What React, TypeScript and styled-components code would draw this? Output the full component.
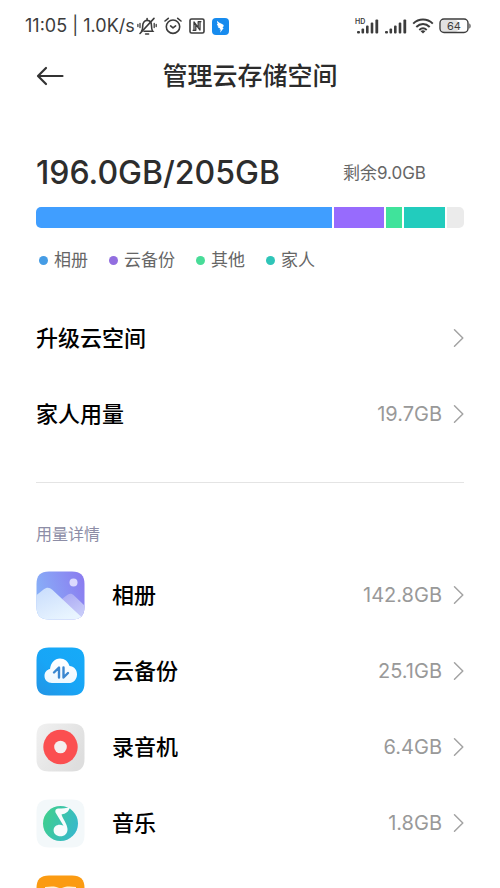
import React from "react";
import styled, { createGlobalStyle } from "styled-components";

const GlobalStyle = createGlobalStyle`
  *, *::before, *::after { box-sizing: border-box; }
  body {
    margin: 0;
    background: #fff;
    color: #000;
    font-family: Inter, "Noto Sans CJK SC", sans-serif;
  }
`;

const Screen = styled.div`
  height: 100vh;
  overflow-y: auto;
  scrollbar-width: none;
  background: #fff;
`;

const StatusBar = styled.div`
  display: flex;
  align-items: center;
  justify-content: space-between;
  height: 52px;
  padding: 0 28px 0 25px;
  color: #3c3c3c;
  font-size: 18px;
  line-height: 24px;
  white-space: nowrap;

  svg { display: block; flex: none; }
`;

const StatusGroup = styled.div<{ $gap: number }>`
  display: flex;
  align-items: center;
  gap: ${(p) => p.$gap}px;
`;

const StatusText = styled.span`
  margin-right: -5px;
`;

const Header = styled.header`
  display: grid;
  grid-template-columns: 48px 1fr 48px;
  align-items: center;
  height: 48px;
  padding: 0 26px;
`;

const BackButton = styled.button`
  display: grid;
  place-items: center;
  width: 48px;
  height: 48px;
  padding: 0;
  border: 0;
  background: none;
  color: #333;
`;

const Title = styled.h1`
  margin: 0;
  color: #2b2b2b;
  font-size: 25px;
  line-height: 36px;
  font-weight: 500;
  text-align: center;
`;

const Content = styled.main`
  padding: 0 36px;
`;

const Summary = styled.section`
  padding: 50px 0 28px;
`;

const Totals = styled.div`
  display: flex;
  align-items: center;
  justify-content: space-between;
  height: 46px;
  padding-right: 38px;
  white-space: nowrap;
`;

const Total = styled.strong`
  color: #2d2d2d;
  font-size: 32px;
  line-height: 40px;
  font-weight: 500;
`;

const Remaining = styled.span`
  color: #666;
  font-size: 17px;
  line-height: 24px;
`;

const UsageBar = styled.div`
  display: flex;
  gap: 2px;
  height: 21px;
  margin-top: 11px;
  border-radius: 5px;
  overflow: hidden;
`;

const Segment = styled.span<{ $share: number; $color: string }>`
  flex: ${(p) => p.$share} 1 0;
  background: ${(p) => p.$color};
`;

const Legend = styled.ul`
  display: flex;
  gap: 21px;
  margin: 0;
  padding: 20px 0 0 3px;
  list-style: none;
`;

const LegendItem = styled.li<{ $color: string }>`
  display: flex;
  align-items: center;
  gap: 6px;
  color: #666;
  font-size: 17px;
  line-height: 24px;

  &::before {
    content: "";
    width: 9px;
    height: 9px;
    border-radius: 50%;
    background: ${(p) => p.$color};
  }
`;

const RowList = styled.ul`
  margin: 0;
  padding: 0;
  list-style: none;
`;

const RowButton = styled.button`
  display: flex;
  align-items: center;
  width: 100%;
  height: 76px;
  padding: 0;
  border: 0;
  background: none;
  color: #000;
  font-family: inherit;
  font-size: 22px;
  line-height: 32px;
  text-align: left;

  svg { display: block; flex: none; }
`;

const RowIcon = styled.span`
  width: 49px;
  margin-right: 27px;
`;

const RowLabel = styled.span`
  flex: 1;
  font-weight: 500;
`;

const RowValue = styled.span`
  margin-right: 11px;
  color: #999;
  font-size: 20px;
`;

const Divider = styled.hr`
  height: 1px;
  margin: 30px 0 39px;
  border: 0;
  background: #e4e4e4;
`;

const SectionTitle = styled.h2`
  margin: 0 0 11px;
  color: #8d8da6;
  font-size: 16px;
  line-height: 24px;
  font-weight: 400;
`;

const BellOffIcon = () => (
  <svg width="20" height="20" viewBox="0 0 20 20" fill="none" stroke="currentColor" strokeWidth="1.6" strokeLinecap="round">
    <path d="M4.500 15.200c1.300-1.400 1.200-3 1.200-5.400 0-3.200 1.800-5.400 4.400-5.400s4.400 2.200 4.400 5.400c0 2.400 0 4 1.200 5.400H7" />
    <path d="M8.600 18h3M10.100 2.600v1.600M17 2.400 3 17.500" />
    <path d="M3 7.500v4M.9 8.500v2M17.200 7.500v4M19.200 8.500v2" strokeWidth="1.3" />
  </svg>
);

const AlarmIcon = () => (
  <svg width="18" height="18" viewBox="0 0 18 18" fill="none" stroke="currentColor" strokeWidth="1.6" strokeLinecap="round" strokeLinejoin="round">
    <circle cx="9" cy="9.700" r="6.700" />
    <path d="m6.600 8.900 2.400 2 2.600-2M1 4 4.300 1.300M17 4l-3.300-2.700" />
  </svg>
);

const NfcIcon = () => (
  <svg width="16" height="16" viewBox="0 0 16 16" fill="none" stroke="currentColor" strokeWidth="1.600" strokeLinejoin="round">
    <rect x="1" y="1" width="14" height="14" rx="1.600" />
    <path d="M5 12.600V4l5.300 7.200M3.600 12.300h3.200V7M11 3.400V12L9.500 10M12.400 3.700H9.200V9" strokeWidth="1.300" />
  </svg>
);

const BirdAppIcon = () => (
  <svg width="17" height="17" viewBox="0 0 17 17">
    <rect width="17" height="17" rx="4" fill="#178bee" />
    <path d="M5.200 2.800c.8 1.400 3.200 2.600 5.700 3.700 1.200.6.8 1.500.3 2.400l-.8 1.200h1.300l-3.600 4.700.7-3.200H7.500l.6-1.400C6.400 10 5.700 9.300 5.600 8.500l1.200.1C5.500 7.600 5 6.600 4.900 5.700l1.200.3C5.200 5 4.900 3.900 5.200 2.800Z" fill="#fff" />
  </svg>
);

const SignalIcon = ({ hd = false }: { hd?: boolean }) => (
  <svg width="23" height="20" viewBox="0 0 23 20" fill="currentColor" overflow="visible">
    {hd && (
      <text x="-1" y="8" fontFamily="Inter, sans-serif" fontSize="7" fontWeight="600">HD</text>
    )}
    <rect x="1" y="15" width="3" height="2.400" rx="1" />
    <rect x="5.500" y="12.500" width="2.600" height="4.900" rx="1" />
    <rect x="10" y="9.500" width="2.600" height="7.900" rx="1" />
    <rect x="14.700" y="6.500" width="2.600" height="10.900" rx="1" />
    <rect x="19.400" y="3.500" width="2.800" height="13.900" rx="1" />
  </svg>
);

const WifiIcon = () => (
  <svg width="22" height="16" viewBox="0 0 22 16" fill="none" stroke="currentColor" strokeWidth="2">
    <path d="M1.200 5.600c5.600-5.400 14-5.400 19.600 0M4.300 8.900c4-3.800 9.400-3.800 13.400 0M7.300 12c2.300-2.100 5.100-2.100 7.400 0" />
    <path d="m8.600 13.200 2.400 2.400 2.400-2.400c-1.400-1.200-3.400-1.200-4.800 0Z" fill="currentColor" stroke="none" />
  </svg>
);

const BatteryIcon = () => (
  <svg width="33" height="16" viewBox="0 0 33 16">
    <rect x="2" y="2" width="17" height="12" rx="3" fill="#e2e2e2" />
    <rect x="1" y="1" width="28" height="13.500" rx="4" fill="none" stroke="currentColor" strokeWidth="1.400" />
    <path d="M30.400 5.500c1.600.5 1.600 4.500 0 5Z" fill="currentColor" />
    <text x="15" y="11.800" textAnchor="middle" fontFamily="Inter, sans-serif" fontSize="11" fill="currentColor">64</text>
  </svg>
);

const BackIcon = () => (
  <svg width="28" height="20" viewBox="0 0 28 20" fill="none" stroke="currentColor" strokeWidth="2.200" strokeLinecap="round" strokeLinejoin="round">
    <path d="M26.500 10H2.200M10 2 2 10l8 8" />
  </svg>
);

const Chevron = () => (
  <svg width="11" height="20" viewBox="0 0 11 20" fill="none" stroke="#a3a3a3" strokeWidth="1.500" strokeLinecap="round" strokeLinejoin="round">
    <path d="m1.500 1.800 8.300 8.200-8.300 8.200" />
  </svg>
);

const tile = "M13 .5h23c8.500 0 12.500 4 12.500 12.500v23c0 8.500-4 12.500-12.500 12.500H13C4.500 48.500.5 44.500.5 36V13C.5 4.500 4.500.5 13 .5Z";

const AlbumIcon = () => (
  <svg width="49" height="49" viewBox="0 0 49 49">
    <defs>
      <linearGradient id="albumSky" x1="0" y1="0.600" x2="1" y2="0.300">
        <stop offset="0" stopColor="#88b2f8" />
        <stop offset="1" stopColor="#8b7df0" />
      </linearGradient>
      <linearGradient id="albumFront" x1="0" y1="0" x2="0.600" y2="1">
        <stop offset="0" stopColor="#c8dcfc" />
        <stop offset="1" stopColor="#e9f5ff" />
      </linearGradient>
      <linearGradient id="albumBack" x1="0" y1="0" x2="0.500" y2="1">
        <stop offset="0" stopColor="#aaa9f4" />
        <stop offset="1" stopColor="#c8ccf9" />
      </linearGradient>
      <clipPath id="albumClip"><path d={tile} /></clipPath>
    </defs>
    <g clipPath="url(#albumClip)">
      <rect width="49" height="49" fill="url(#albumSky)" />
      <path d="m26 28 5.500-4.200c2.500-1.600 4.500-1.100 6.500.7L49 35v14H35Z" fill="url(#albumBack)" />
      <path d="M0 24.500 7.500 18.500c3.200-2.500 6-2.400 8.800.3L47 47.500V49H0Z" fill="url(#albumFront)" />
    </g>
    <circle cx="37.500" cy="11.500" r="4" fill="#dcd9fd" />
  </svg>
);

const CloudBackupIcon = () => (
  <svg width="49" height="49" viewBox="0 0 49 49">
    <defs>
      <linearGradient id="cloudTile" x1="0" y1="1" x2="0.800" y2="0">
        <stop offset="0" stopColor="#2394e4" />
        <stop offset="0.500" stopColor="#18a5f6" />
        <stop offset="1" stopColor="#16aaf8" />
      </linearGradient>
      <linearGradient id="cloudBody" x1="0" y1="0" x2="0" y2="1">
        <stop offset="0" stopColor="#fff" />
        <stop offset="1" stopColor="#eef8ff" />
      </linearGradient>
    </defs>
    <path d={tile} fill="url(#cloudTile)" />
    <path d="M16 36c-4.500 0-7.500-3-7.500-7 0-3.500 2.200-6.200 5.500-6.900C14.800 16 18.500 11.500 24 11.500c4.700 0 8.300 3.100 9.500 7.500 4.400.4 7.500 3.800 7.500 8.200 0 5.300-3.500 8.800-8.500 8.800Z" fill="url(#cloudBody)" />
    <path d="m18 25.500 5-5V30.500M27.500 20.500v10l4.500-4.500" fill="none" stroke="#3a87d0" strokeWidth="2.400" strokeLinecap="round" strokeLinejoin="round" />
  </svg>
);

const RecorderIcon = () => (
  <svg width="49" height="49" viewBox="0 0 49 49">
    <defs>
      <linearGradient id="recorderTile" x1="0" y1="0" x2="1" y2="0.600">
        <stop offset="0" stopColor="#f1f1f1" />
        <stop offset="1" stopColor="#dedede" />
      </linearGradient>
    </defs>
    <path d={tile} fill="url(#recorderTile)" />
    <circle cx="24.500" cy="24" r="17.200" fill="#fb4f50" />
    <circle cx="24.500" cy="24" r="6.300" fill="#f5eeee" />
  </svg>
);

const MusicIcon = () => (
  <svg width="49" height="49" viewBox="0 0 49 49">
    <defs>
      <linearGradient id="musicDisc" x1="0" y1="0.300" x2="1" y2="0.700">
        <stop offset="0" stopColor="#3fcf8e" />
        <stop offset="1" stopColor="#38b8cd" />
      </linearGradient>
    </defs>
    <path d={tile} fill="#f3f8fa" />
    <circle cx="24.500" cy="24.500" r="17.500" fill="url(#musicDisc)" />
    <path d="M34 8c-1.500 5-4 6.800-8.500 7.400 1.300 4.500 5.800 9.600 6 14.600.2 4.500-2.800 7.300-7 7.300-4 0-6.900-2.500-6.900-6 0-3.800 3.400-6 7.400-5.400 1 .1 1.800.4 2.500.8L19.500 13.500c-.6-2.200.2-3.700 2.500-3.900C26.500 9.300 30.500 9.200 34 8Z" fill="#f8fcfd" />
  </svg>
);

const ReadingIcon = () => (
  <svg width="49" height="49" viewBox="0 0 49 49">
    <path d={tile} fill="#fb9b12" />
    <path d="M9 12c6-1 11-1 15.500 1.500C29 11 34 11 40 12v24c-6-1-11-1-15.500 1.500C20 35 15 35 9 36Z" fill="#fff1d8" />
    <path d="M24.500 14v23" stroke="#fb9b12" strokeWidth="2" />
  </svg>
);

const segments = [
  { label: "相册", share: 297, color: "#409eff", dot: "#459ce5" },
  { label: "云备份", share: 51, color: "#976bfd", dot: "#926ee0" },
  { label: "其他", share: 16, color: "#40e39b", dot: "#48dc98" },
  { label: "家人", share: 41, color: "#22ccbd", dot: "#2fc5b8" },
];

const details = [
  { label: "相册", value: "142.8GB", Icon: AlbumIcon },
  { label: "云备份", value: "25.1GB", Icon: CloudBackupIcon },
  { label: "录音机", value: "6.4GB", Icon: RecorderIcon },
  { label: "音乐", value: "1.8GB", Icon: MusicIcon },
  { label: "", value: "", Icon: ReadingIcon },
];

type RowProps = { label: string; value?: string; Icon?: React.ComponentType };

const Row = ({ label, value, Icon }: RowProps) => (
  <li>
    <RowButton type="button" aria-label={label ? undefined : "阅读"}>
      {Icon && <RowIcon aria-hidden="true"><Icon /></RowIcon>}
      <RowLabel>{label}</RowLabel>
      {value && <RowValue>{value}</RowValue>}
      <Chevron />
    </RowButton>
  </li>
);

export default function App() {
  return (
    <>
      <GlobalStyle />
      <Screen>
        <StatusBar>
          <StatusGroup $gap={7}>
            <StatusText>11:05 | 1.0K/s</StatusText>
            <BellOffIcon />
            <AlarmIcon />
            <NfcIcon />
            <BirdAppIcon />
          </StatusGroup>
          <StatusGroup $gap={5}>
            <SignalIcon hd />
            <SignalIcon />
            <WifiIcon />
            <BatteryIcon />
          </StatusGroup>
        </StatusBar>
        <Header>
          <BackButton type="button" aria-label="返回"><BackIcon /></BackButton>
          <Title>管理云存储空间</Title>
        </Header>
        <Content>
          <Summary>
            <Totals>
              <Total>196.0GB/205GB</Total>
              <Remaining>剩余9.0GB</Remaining>
            </Totals>
            <UsageBar>
              {segments.map((s) => (
                <Segment key={s.label} $share={s.share} $color={s.color} />
              ))}
              <Segment $share={17} $color="#ebebeb" />
            </UsageBar>
            <Legend>
              {segments.map((s) => (
                <LegendItem key={s.label} $color={s.dot}>{s.label}</LegendItem>
              ))}
            </Legend>
          </Summary>
          <RowList>
            <Row label="升级云空间" />
            <Row label="家人用量" value="19.7GB" />
          </RowList>
          <Divider />
          <SectionTitle>用量详情</SectionTitle>
          <RowList>
            {details.map((d, i) => (
              <Row key={i} {...d} />
            ))}
          </RowList>
        </Content>
      </Screen>
    </>
  );
}
